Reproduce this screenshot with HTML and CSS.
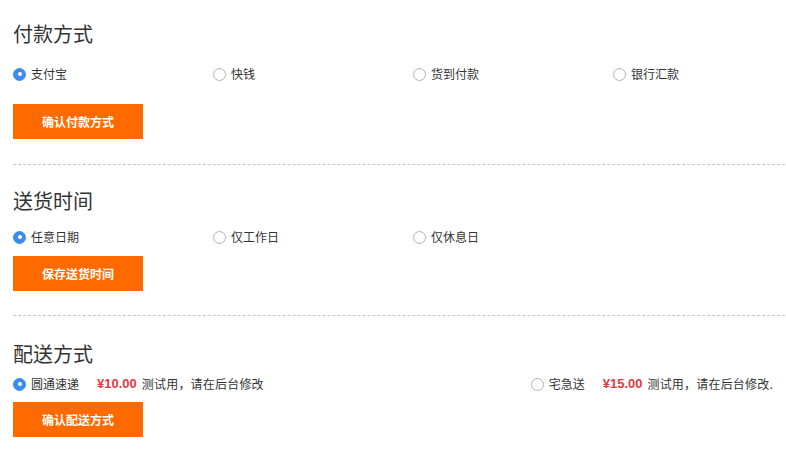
FILE: index.html
```html
<!DOCTYPE html>
<html lang="zh">
<head>
<meta charset="utf-8">
<link rel="stylesheet" href="styles.css">
</head>
<body>
<div class="page">
  <section class="block block-pay">
    <h2 class="title">付款方式</h2>
    <div class="options">
      <label class="opt"><span class="radio on"></span>支付宝</label>
      <label class="opt"><span class="radio"></span>快钱</label>
      <label class="opt"><span class="radio"></span>货到付款</label>
      <label class="opt"><span class="radio"></span>银行汇款</label>
    </div>
    <button class="btn">确认付款方式</button>
  </section>
  <section class="block block-time">
    <h2 class="title">送货时间</h2>
    <div class="options">
      <label class="opt"><span class="radio on"></span>任意日期</label>
      <label class="opt"><span class="radio"></span>仅工作日</label>
      <label class="opt"><span class="radio"></span>仅休息日</label>
    </div>
    <button class="btn">保存送货时间</button>
  </section>
  <section class="block block-ship last">
    <h2 class="title">配送方式</h2>
    <div class="options ship">
      <label class="opt wide"><span class="radio on"></span>圆通速递<span class="price">¥10.00</span><span class="note">测试用，请在后台修改</span></label>
      <label class="opt wide"><span class="radio"></span>宅急送<span class="price">¥15.00</span><span class="note">测试用，请在后台修改.</span></label>
    </div>
    <button class="btn">确认配送方式</button>
  </section>
</div>
</body>
</html>
```
FILE: styles.css
```css
* { box-sizing: border-box; }
html, body { margin: 0; padding: 0; background: #fff; }
body {
  font-family: "Noto Sans CJK SC", "Liberation Sans", sans-serif;
  color: #333;
  font-size: 12px;
}
.page { padding: 21px 1px 0 13px; }
.block { border-bottom: 1px dashed #c4c4c4; }
.block.last { border-bottom: none; }
.title {
  margin: 0;
  font-size: 20px;
  line-height: 26px;
  font-weight: normal;
  color: #333;
}
.options {
  display: flex;
  height: 20px;
  align-items: center;
}
.opt {
  flex: none;
  width: 200px;
  display: flex;
  align-items: center;
  line-height: 20px;
  white-space: nowrap;
}
.options.ship { justify-content: space-between; padding-right: 12px; }
.opt.wide { width: auto; }
.radio {
  width: 13px;
  height: 13px;
  border-radius: 50%;
  border: 1px solid #b4b4b4;
  background: #fff;
  margin-right: 5px;
  flex: none;
  position: relative;
}
.radio.on {
  border-color: #3b8ced;
  background: #3b8ced;
}
.radio.on::after {
  content: "";
  position: absolute;
  left: 3.5px;
  top: 3.5px;
  width: 4px;
  height: 4px;
  border-radius: 50%;
  background: #fff;
}
.price {
  color: #e4393c;
  font-weight: bold;
  font-size: 13px;
  font-family: "Liberation Sans", "Noto Sans CJK SC", sans-serif;
  margin-left: 18px;
  margin-right: 5px;
}
.note { letter-spacing: 0.2px; }
.btn {
  display: block;
  width: 130px;
  height: 35px;
  border: none;
  background: #ff6a00;
  color: #fff;
  font-family: "Noto Sans CJK SC", sans-serif;
  font-size: 12px;
  font-weight: bold;
  padding: 0;
  cursor: pointer;
}
.block-pay .options { margin-top: 17px; }
.block-pay .btn { margin-top: 20px; margin-bottom: 25px; }
.block-time { padding-top: 23px; }
.block-time .options { margin-top: 13px; }
.block-time .btn { margin-top: 9px; margin-bottom: 24px; }
.block-ship { padding-top: 25px; }
.block-ship .options { margin-top: 7px; }
.block-ship .btn { margin-top: 8px; }
```
